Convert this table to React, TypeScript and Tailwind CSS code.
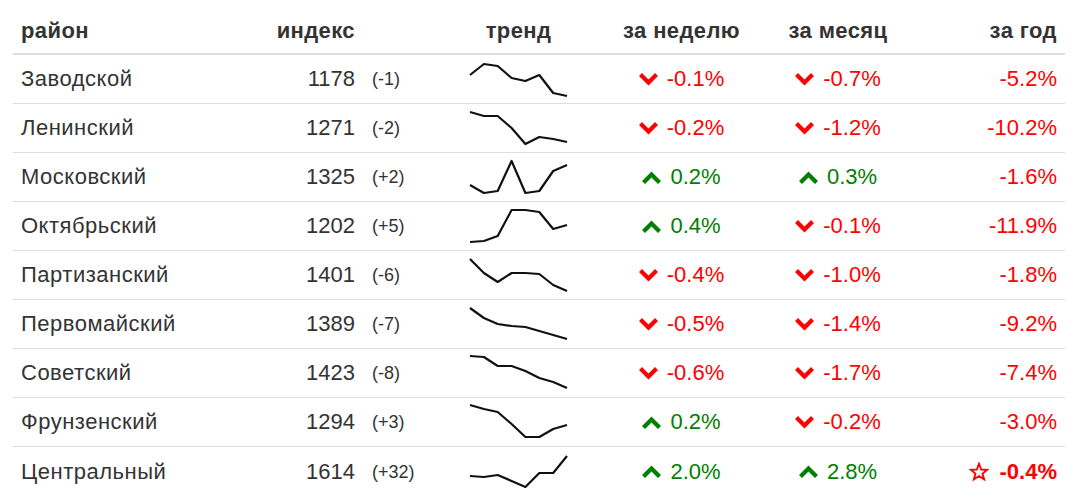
const rows = [
  { name: "Заводской", idx: 1178, ch: "(-1)", line: [20, 9, 11, 23, 26, 20, 38, 41], w: "-0.1%", m: "-0.7%", y: "-5.2%" },
  { name: "Ленинский", idx: 1271, ch: "(-2)", line: [8, 12, 12, 24, 40, 33, 35, 38], w: "-0.2%", m: "-1.2%", y: "-10.2%" },
  { name: "Московский", idx: 1325, ch: "(+2)", line: [32, 40, 38, 8, 40, 38, 18, 12], w: "0.2%", m: "0.3%", y: "-1.6%" },
  { name: "Октябрьский", idx: 1202, ch: "(+5)", line: [40, 39, 34, 8, 8, 10, 27, 23], w: "0.4%", m: "-0.1%", y: "-11.9%" },
  { name: "Партизанский", idx: 1401, ch: "(-6)", line: [8, 22, 31, 22, 22, 23, 34, 40], w: "-0.4%", m: "-1.0%", y: "-1.8%" },
  { name: "Первомайский", idx: 1389, ch: "(-7)", line: [8, 18, 24, 26, 27, 31, 35, 39], w: "-0.5%", m: "-1.4%", y: "-9.2%" },
  { name: "Советский", idx: 1423, ch: "(-8)", line: [7, 8, 17, 17, 22, 29, 33, 39], w: "-0.6%", m: "-1.7%", y: "-7.4%" },
  { name: "Фрунзенский", idx: 1294, ch: "(+3)", line: [7, 11, 14, 26, 39, 39, 31, 27], w: "0.2%", m: "-0.2%", y: "-3.0%" },
  { name: "Центральный", idx: 1614, ch: "(+32)", line: [28, 29, 27, 33, 39, 25, 25, 8], w: "2.0%", m: "2.8%", y: "-0.4%", best: true },
];

const cols = "grid grid-cols-[230px_120px_77px_157px_169px_144px_155px]";

function Chevron({ up }: { up: boolean }) {
  return (
    <svg width="19" height="13" viewBox="0 0 19 13" className="shrink-0">
      {up ? (
        <polygon points="0,10 3,13 9.5,6.5 16,13 19,10 9.5,0.5" fill="#008000" />
      ) : (
        <polygon points="0,3 3,0 9.5,6.5 16,0 19,3 9.5,12.5" fill="#ff0000" />
      )}
    </svg>
  );
}

function Change({ v }: { v: string }) {
  const up = !v.startsWith("-");
  return (
    <div className={`flex items-center justify-center gap-[9px] ${up ? "text-[#008000]" : "text-[#ff0000]"}`}>
      <Chevron up={up} />
      <span>{v}</span>
    </div>
  );
}

function Spark({ pts }: { pts: number[] }) {
  const d = pts.map((p, i) => `${(1 + i * 13.86).toFixed(1)},${p}`).join(" ");
  return (
    <svg width="100" height="48" viewBox="0 0 100 48" className="block">
      <polyline points={d} fill="none" stroke="#111" strokeWidth="2.2" strokeLinejoin="round" />
    </svg>
  );
}

function Star() {
  return (
    <svg width="20" height="20" viewBox="0 0 24 24" className="shrink-0">
      <polygon
        points="12,2 14.6,9 22,9.3 16.2,13.9 18.2,21 12,16.9 5.8,21 7.8,13.9 2,9.3 9.4,9"
        fill="none"
        stroke="#ff0000"
        strokeWidth="2.2"
        strokeLinejoin="miter"
      />
    </svg>
  );
}

export default function App() {
  return (
    <div className="bg-white w-[1080px] h-[503px] overflow-hidden pl-[13px] font-['Liberation_Sans',Arial,sans-serif] text-[22px] text-[#333]">
      <div className="w-[1052px]">
        <div className={`${cols} h-[55px] items-end pb-[6px] border-b-2 border-[#ddd] font-bold leading-[32px] tracking-[0.4px]`}>
          <div className="px-2">район</div>
          <div className="px-2 text-right">индекс</div>
          <div />
          <div className="px-2 text-center">тренд</div>
          <div className="px-2 text-center">за неделю</div>
          <div className="px-2 text-center">за месяц</div>
          <div className="px-2 text-right">за год</div>
        </div>
        {rows.map((r, i) => (
          <div
            key={r.name}
            className={`${cols} h-[49px] items-center leading-[32px] ${i < rows.length - 1 ? "border-b border-[#ddd]" : ""}`}
          >
            <div className="px-2 tracking-[0.5px]">{r.name}</div>
            <div className="px-2 text-right">{r.idx}</div>
            <div className="pl-[9px] text-[18px]">{r.ch}</div>
            <div className="flex justify-center">
              <Spark pts={r.line} />
            </div>
            <Change v={r.w} />
            <Change v={r.m} />
            <div className="px-2 flex justify-end items-center text-[#ff0000]">
              {r.best ? (
                <div className="flex items-center gap-[11px]">
                  <Star />
                  <span className="font-bold">{r.y}</span>
                </div>
              ) : (
                <span>{r.y}</span>
              )}
            </div>
          </div>
        ))}
      </div>
    </div>
  );
}
